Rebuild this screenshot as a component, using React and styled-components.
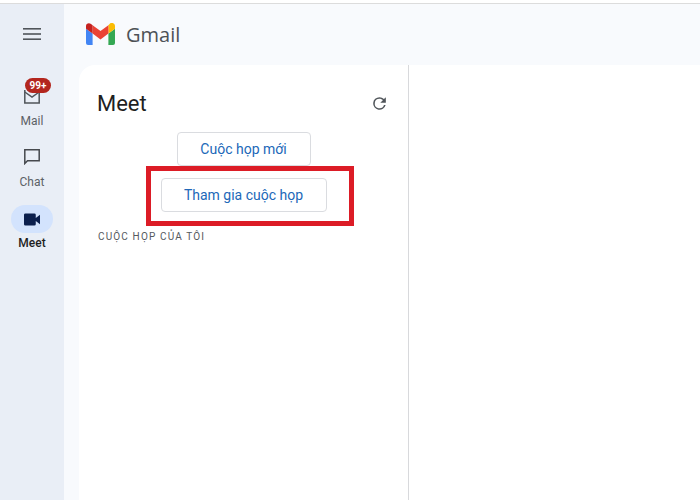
import React from "react";
import styled, { createGlobalStyle } from "styled-components";

const Global = createGlobalStyle`
  html, body { margin: 0; padding: 0; width: 700px; height: 500px; overflow: hidden; background: #fff; }
  body { font-family: "Roboto", "Liberation Sans", sans-serif; }
  * { box-sizing: border-box; }
`;

const Page = styled.div`
  width: 700px;
  height: 500px;
  display: flex;
  flex-direction: column;
  background: #fff;
`;
const TopStrip = styled.div`
  height: 4px;
  flex: none;
  background: #fff;
  border-bottom: 1px solid #dcdcdc;
`;
const Body = styled.div`
  flex: 1;
  display: flex;
  min-height: 0;
  background: #f8fafd;
`;
const Rail = styled.nav`
  width: 64px;
  flex: none;
  background: #e9eef6;
  display: flex;
  flex-direction: column;
  align-items: center;
  padding-top: 20px;
`;
const Burger = styled.div`
  height: 20px;
  display: flex;
  align-items: center;
  justify-content: center;
  margin-bottom: 37px;
`;
const RailItem = styled.div`
  position: relative;
  width: 64px;
  height: 61px;
  display: flex;
  flex-direction: column;
  align-items: center;
`;
const RailIcon = styled.div`
  width: 42px;
  height: ${(p) => (p.$active ? 28 : 30)}px;
  margin-top: ${(p) => (p.$active ? 2 : 0)}px;
  border-radius: 15px;
  display: flex;
  align-items: center;
  justify-content: center;
  background: ${(p) => (p.$active ? "#d3e3fd" : "transparent")};
`;
const RailLabel = styled.span`
  font-size: 12px;
  line-height: 14px;
  margin-top: 3px;
  color: ${(p) => (p.$active ? "#1f1f1f" : "#5c6166")};
  font-weight: ${(p) => (p.$active ? 500 : 400)};
`;
const Badge = styled.span`
  position: absolute;
  left: 25px;
  top: -3px;
  width: 26px;
  height: 15px;
  border-radius: 8px;
  background: #b3261e;
  color: #fff;
  font-size: 10px;
  font-weight: 700;
  line-height: 15px;
  text-align: center;
`;
const Main = styled.div`
  flex: 1;
  display: flex;
  flex-direction: column;
  min-width: 0;
`;
const Header = styled.header`
  height: 61px;
  flex: none;
  display: flex;
  align-items: center;
  padding: 0 0 2px 22px;
  gap: 11px;
`;
const Brand = styled.span`
  font-family: "Open Sans", "Liberation Sans", sans-serif;
  font-size: 20px;
  color: #4d5156;
  margin-top: 2px;
`;
const Content = styled.div`
  flex: 1;
  display: flex;
  margin-left: 15px;
  min-height: 0;
  background: #fff;
  border-top-left-radius: 16px;
`;
const Panel = styled.section`
  position: relative;
  width: 330px;
  flex: none;
  border-right: 1px solid #d8d9dc;
  display: flex;
  flex-direction: column;
  align-items: center;
`;
const PanelHead = styled.div`
  width: 100%;
  height: 67px;
  display: flex;
  align-items: center;
  justify-content: space-between;
  padding: 9px 19px 0 18px;
`;
const Title = styled.h1`
  margin: 0;
  font-size: 22px;
  font-weight: 400;
  color: #1f1f1f;
`;
const MeetButton = styled.button`
  width: ${(p) => p.$w}px;
  height: 34px;
  flex: none;
  background: #fff;
  border: 1px solid #dadce0;
  border-radius: 4px;
  color: #2168b8;
  font-family: "Roboto", "Liberation Sans", sans-serif;
  font-size: 14px;
  font-weight: 400;
  letter-spacing: 0;
  padding: 0;
  margin-bottom: 12px;
`;
const Section = styled.div`
  align-self: flex-start;
  margin: 6px 0 0 19px;
  font-size: 10px;
  line-height: 14px;
  letter-spacing: 1.15px;
  color: #54595e;
  font-weight: 400;
`;
const Highlight = styled.div`
  position: absolute;
  left: 67px;
  top: 101px;
  width: 208px;
  height: 60px;
  border: 5px solid #dc1c26;
  pointer-events: none;
`;
const Detail = styled.div`
  flex: 1;
  background: #fff;
`;

const GmailLogo = () => (
  <svg width="29" height="22" viewBox="0 0 29 22">
    <path d="M2 22h4.6V10.6L0 5.8V20a2 2 0 0 0 2 2z" fill="#4285f4" />
    <path d="M22.4 22H27a2 2 0 0 0 2-2V5.8l-6.6 4.8z" fill="#34a853" />
    <path d="M22.4 2.2v8.4L29 5.8V3c0-2.6-3-4-5-2.6z" fill="#fbbc04" />
    <path d="M6.6 10.6V2.2L14.5 8l7.9-5.8v8.4L14.5 16.4z" fill="#ea4335" />
    <path d="M0 3v2.8l6.6 4.8V2.2L5 1C3 -.6 0 .4 0 3z" fill="#c5221f" />
  </svg>
);

export default function App() {
  return (
    <Page>
      <Global />
      <TopStrip />
      <Body>
        <Rail>
          <Burger>
            <svg width="18" height="12" viewBox="0 0 18 12" fill="#50555a">
              <rect y="0" width="18" height="1.6" />
              <rect y="5.2" width="18" height="1.6" />
              <rect y="10.4" width="18" height="1.6" />
            </svg>
          </Burger>
          <RailItem>
            <RailIcon>
              <svg width="16" height="15" viewBox="0 0 16 15" fill="none" stroke="#50555a" strokeWidth="1.5">
                <path d="M.8 1v13h14.4V1" />
                <path d="M.8 3l7.2 5 7.2-5" />
              </svg>
            </RailIcon>
            <RailLabel>Mail</RailLabel>
            <Badge>99+</Badge>
          </RailItem>
          <RailItem>
            <RailIcon>
              <svg width="16" height="16" viewBox="0 0 16 16" fill="none" stroke="#46494e" strokeWidth="1.5">
                <path d="M.8 14.5V.8h14.4v11H3.5z" />
              </svg>
            </RailIcon>
            <RailLabel>Chat</RailLabel>
          </RailItem>
          <RailItem>
            <RailIcon $active>
              <svg width="16" height="13" viewBox="0 0 17 13" fill="#0b1f4d">
                <path d="M1.5 0H11a1.5 1.5 0 0 1 1.5 1.5V5L17 1.5v10L12.5 8v3.5A1.5 1.5 0 0 1 11 13H1.5A1.5 1.5 0 0 1 0 11.5v-10A1.5 1.5 0 0 1 1.5 0z" />
              </svg>
            </RailIcon>
            <RailLabel $active>Meet</RailLabel>
          </RailItem>
        </Rail>
        <Main>
          <Header>
            <GmailLogo />
            <Brand>Gmail</Brand>
          </Header>
          <Content>
            <Panel>
              <PanelHead>
                <Title>Meet</Title>
                <svg width="19" height="19" viewBox="0 0 24 24" fill="#50555a">
                  <path d="M17.65 6.35A7.96 7.96 0 0 0 12 4a8 8 0 1 0 7.73 10h-2.08A6 6 0 1 1 12 6c1.66 0 3.14.69 4.22 1.78L13 11h7V4z" />
                </svg>
              </PanelHead>
              <MeetButton $w={134}>Cuộc họp mới</MeetButton>
              <MeetButton $w={166}>Tham gia cuộc họp</MeetButton>
              <Section>CUỘC HỌP CỦA TÔI</Section>
              <Highlight />
            </Panel>
            <Detail />
          </Content>
        </Main>
      </Body>
    </Page>
  );
}
